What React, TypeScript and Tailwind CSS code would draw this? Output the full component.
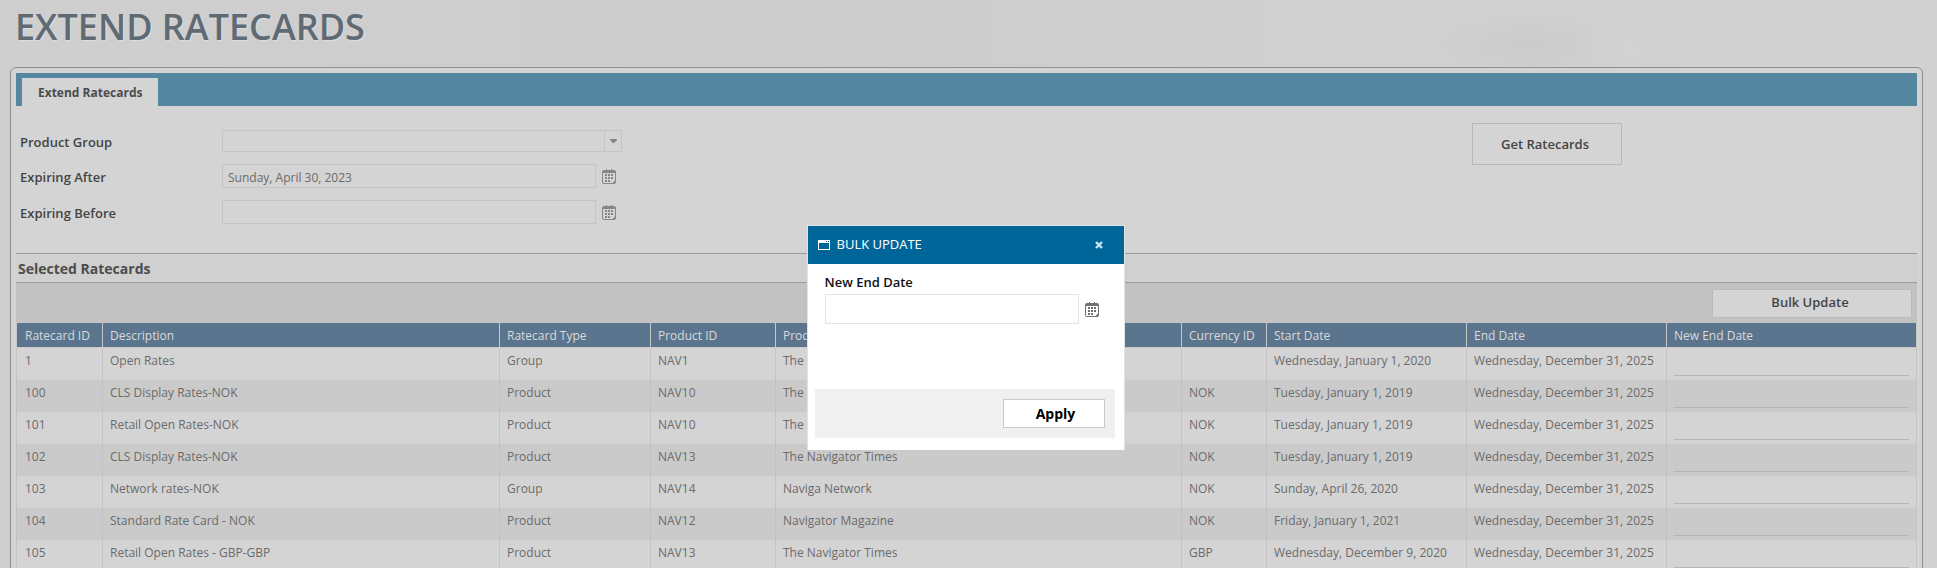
import React from "react";

type Ratecard = {
  id: string;
  description: string;
  type: string;
  productId: string;
  product: string;
  currency: string;
  start: string;
  end: string;
};

const END = "Wednesday, December 31, 2025";

const RATECARDS: Ratecard[] = [
  { id: "1", description: "Open Rates", type: "Group", productId: "NAV1", product: "The Navigator", currency: "", start: "Wednesday, January 1, 2020", end: END },
  { id: "100", description: "CLS Display Rates-NOK", type: "Product", productId: "NAV10", product: "The Navigator", currency: "NOK", start: "Tuesday, January 1, 2019", end: END },
  { id: "101", description: "Retail Open Rates-NOK", type: "Product", productId: "NAV10", product: "The Navigator", currency: "NOK", start: "Tuesday, January 1, 2019", end: END },
  { id: "102", description: "CLS Display Rates-NOK", type: "Product", productId: "NAV13", product: "The Navigator Times", currency: "NOK", start: "Tuesday, January 1, 2019", end: END },
  { id: "103", description: "Network rates-NOK", type: "Group", productId: "NAV14", product: "Naviga Network", currency: "NOK", start: "Sunday, April 26, 2020", end: END },
  { id: "104", description: "Standard Rate Card - NOK", type: "Product", productId: "NAV12", product: "Navigator Magazine", currency: "NOK", start: "Friday, January 1, 2021", end: END },
  { id: "105", description: "Retail Open Rates - GBP-GBP", type: "Product", productId: "NAV13", product: "The Navigator Times", currency: "GBP", start: "Wednesday, December 9, 2020", end: END },
];

const COLUMNS = [
  { label: "Ratecard ID", width: "w-[87px]" },
  { label: "Description", width: "w-[397px]" },
  { label: "Ratecard Type", width: "w-[151px]" },
  { label: "Product ID", width: "w-[125px]" },
  { label: "Product", width: "" },
  { label: "Currency ID", width: "w-[85px]" },
  { label: "Start Date", width: "w-[200px]" },
  { label: "End Date", width: "w-[200px]" },
  { label: "New End Date", width: "w-[250px]" },
];

function CalendarIcon() {
  return (
    <svg width="14" height="15" viewBox="0 0 14 15" fill="currentColor" aria-hidden="true">
      <path d="M2 1h2V0h1v1h4V0h1v1h2a2 2 0 0 1 2 2v10a2 2 0 0 1-2 2H2a2 2 0 0 1-2-2V3a2 2 0 0 1 2-2ZM1 4v9.2c0 .5.3.8.8.8H10.5L13 11.5V4Z" fillRule="evenodd" />
      <path d="M3 5h2v2H3ZM6 5h2v2H6ZM9 5h2v2H9ZM3 8h2v2H3ZM6 8h2v2H6ZM9 8h2v2H9ZM3 11h2v2H3ZM6 11h2v2H6Z" />
    </svg>
  );
}

const LABEL = "w-[202px] pt-0.5 text-[13px] leading-4 font-semibold text-[#444]";

function DateField({ id, label, value }: { id: string; label: string; value?: string }) {
  return (
    <div className="flex items-center">
      <label htmlFor={id} className={LABEL}>
        {label}
      </label>
      <input
        id={id}
        type="text"
        defaultValue={value}
        className="h-6 w-[374px] border border-[#c4c4c4] bg-transparent px-[5px] pt-0.5 text-xs text-[#6b6b6b]"
      />
      <button type="button" aria-label={`${label} calendar`} className="ml-1.5 text-[#868686]">
        <CalendarIcon />
      </button>
    </div>
  );
}

function Filters() {
  return (
    <div className="flex items-start justify-between pt-[17px] pb-[29px] pl-1">
      <div className="flex flex-col gap-3 pt-[7px]">
        <div className="flex items-center">
          <label htmlFor="product-group" className={LABEL}>
            Product Group
          </label>
          <div className="relative">
            <select
              id="product-group"
              className="block h-[22px] w-[400px] appearance-none border border-[#c4c4c4] bg-transparent px-[5px] text-xs text-[#6b6b6b]"
            >
              <option></option>
            </select>
            <span className="pointer-events-none absolute inset-y-0 right-0 flex w-[18px] items-center justify-center border-l border-[#c4c4c4] text-[#858585]">
              <svg width="7" height="4" viewBox="0 0 7 4" fill="currentColor" aria-hidden="true">
                <path d="M0 0h7v1L4 4H3L0 1Z" />
              </svg>
            </span>
          </div>
        </div>
        <DateField id="expiring-after" label="Expiring After" value="Sunday, April 30, 2023" />
        <DateField id="expiring-before" label="Expiring Before" />
      </div>
      <button
        type="button"
        className="mr-[295px] h-[42px] w-[150px] border border-[#b9b9b9] pt-0.5 pr-1 text-[13px] font-semibold text-[#444]"
      >
        Get Ratecards
      </button>
    </div>
  );
}

const CELL = "border-r border-[#c3c3c3] px-[7px] pt-[5px] align-top first:border-l first:pl-2";

function RatecardTable() {
  return (
    <table className="w-full table-fixed border-separate border-spacing-0 text-left text-xs leading-4 whitespace-nowrap">
      <thead>
        <tr className="h-[25px] bg-[#5c758e] text-[#dadada]">
          {COLUMNS.map((column) => (
            <th
              key={column.label}
              scope="col"
              className={`border-r border-b border-[#c8c8c8] px-[7px] pt-0.5 font-normal first:border-l first:pl-2 ${column.width}`}
            >
              {column.label}
            </th>
          ))}
        </tr>
      </thead>
      <tbody className="text-[#6b6b6b]">
        {RATECARDS.map((card) => (
          <tr key={card.id} className="h-8 odd:bg-[#d4d4d4] even:bg-[#cacaca]">
            <td className={CELL}>{card.id}</td>
            <td className={CELL}>{card.description}</td>
            <td className={CELL}>{card.type}</td>
            <td className={CELL}>{card.productId}</td>
            <td className={CELL}>{card.product}</td>
            <td className={CELL}>{card.currency}</td>
            <td className={CELL}>{card.start}</td>
            <td className={CELL}>{card.end}</td>
            <td className={CELL}>
              <input
                type="text"
                aria-label={`New end date for ratecard ${card.id}`}
                className="block h-[23px] w-full border-b border-[#b6b6b6] bg-transparent"
              />
            </td>
          </tr>
        ))}
      </tbody>
    </table>
  );
}

function BulkUpdateDialog() {
  return (
    <div className="fixed inset-0 flex items-start justify-center pt-[225px] pr-1.5">
      <section
        role="dialog"
        aria-labelledby="bulk-update-title"
        className="w-[318px] border border-b-0 border-[#e2e2e2] bg-white"
      >
        <header className="flex h-[38px] items-center bg-[#006699] pr-[21px] pl-2.5 text-white">
          <svg width="12" height="10" viewBox="0 0 12 10" aria-hidden="true">
            <path d="M0 0h12v10H0ZM1 3v6h10V3ZM8 1v1h1V1ZM10 1v1h1V1Z" fill="currentColor" fillRule="evenodd" />
          </svg>
          <h2 id="bulk-update-title" className="ml-[7px] text-[13px]">
            BULK UPDATE
          </h2>
          <button type="button" aria-label="Close" className="ml-auto text-[#c5e5f5]">
            <svg width="8" height="8" viewBox="0 0 8 8" aria-hidden="true">
              <path d="M1 1l6 6M7 1l-6 6" stroke="currentColor" strokeWidth="2.4" />
            </svg>
          </button>
        </header>
        <div className="flex flex-col gap-[65px] pt-2.5 pr-[9px] pb-3 pl-[7px]">
          <div className="pl-2.5">
            <label htmlFor="new-end-date" className="block text-[13px] leading-4 font-semibold text-[#111]">
              New End Date
            </label>
            <div className="mt-1 flex items-center gap-1.5">
              <input id="new-end-date" type="text" className="h-[30px] w-[254px] border border-[#e2e2e2] px-2 text-xs" />
              <button type="button" aria-label="New End Date calendar" className="text-[#707070]">
                <CalendarIcon />
              </button>
            </div>
          </div>
          <footer className="flex h-[49px] items-center justify-end bg-[#f0f0f0] pr-2.5">
            <button
              type="button"
              className="h-[29px] w-[102px] border border-[#cacaca] bg-white pt-px pl-1 text-sm font-bold text-black"
            >
              Apply
            </button>
          </footer>
        </div>
      </section>
    </div>
  );
}

export default function App() {
  return (
    <div className="h-screen overflow-hidden bg-[#cfcfcf] bg-[radial-gradient(circle_at_1390px_10px,#d1d1d1_0,#d0d0d0_50px,transparent_56px),radial-gradient(circle_at_1630px_50px,#d2d2d2_0,#d0d0d0_36px,transparent_50px),radial-gradient(ellipse_at_1530px_45px,#cbcbcb_0,transparent_110px),linear-gradient(90deg,#cfcfcf,#cdcdcd_45%,#d1d1d1_75%,#d1d1d1)] font-['Open_Sans','Noto_Sans',sans-serif]">
      <main className="pr-3.5 pl-2.5">
        <h1 className="mb-[13px] pl-[5px] text-4xl leading-[54px] font-semibold text-[#5f6a73] [text-shadow:1px_1px_1px_#dedede]">
          EXTEND RATECARDS
        </h1>
        <div className="rounded-t-md border border-[#8e8e8e] bg-[#d4d4d4] px-[5px] pt-[5px]">
          <nav className="flex h-[33px] items-end bg-[#5588a0] pl-1.5">
            <a href="#extend" className="flex h-7 items-center bg-[#d4d4d4] px-4 pt-0.5 text-xs font-bold text-[#4c4c4c]">
              Extend Ratecards
            </a>
          </nav>
          <Filters />
          <h2 className="border-y border-[#9c9c9c] bg-[#d0d0d0] pt-0.5 pl-0.5 text-sm leading-[26px] font-bold text-[#4c4c4c]">
            Selected Ratecards
          </h2>
          <div className="flex h-10 items-center justify-end bg-[#c2c2c2] pr-[5px]">
            <button
              type="button"
              className="h-[29px] w-[200px] border border-[#bababa] bg-[#d4d4d4] pr-1 text-[13px] font-semibold text-[#444]"
            >
              Bulk Update
            </button>
          </div>
          <RatecardTable />
        </div>
      </main>
      <BulkUpdateDialog />
    </div>
  );
}
